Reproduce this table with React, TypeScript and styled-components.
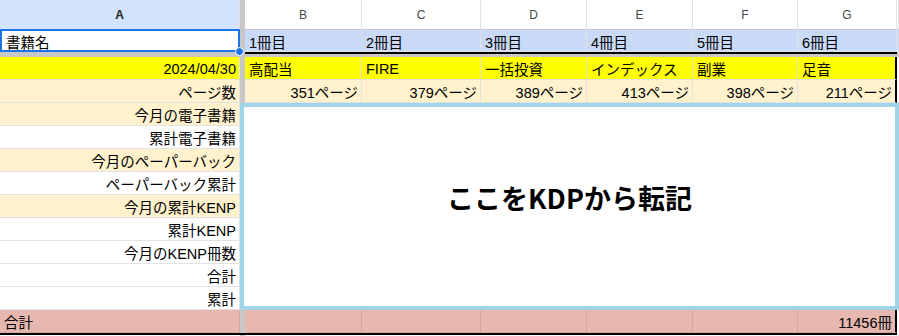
import React from "react";
import styled, { createGlobalStyle } from "styled-components";

const Global = createGlobalStyle`
  html, body { margin: 0; padding: 0; background: #ffffff; }
  body { font-family: "Liberation Sans", "Noto Sans CJK JP", sans-serif; }
`;

const GRID = "#e2e2e2";
const FREEZE = "#c8c8c8";

const Sheet = styled.div`
  display: grid;
  grid-template-columns: 240px 5px 117px 119px 106px 106px 105px 99px 2px;
  grid-template-rows: 30px 22px 5px repeat(12, 23px) 3px;
  width: 899px;
  height: 336px;
  overflow: hidden;
  background: #ffffff;
  font-family: "Liberation Sans", "Noto Sans CJK JP", sans-serif;
  font-size: 14.5px;
  color: #000000;
`;

const ColHeader = styled.div<{ $col: number; $active?: boolean }>`
  grid-column: ${(p) => p.$col};
  grid-row: 1;
  display: flex;
  align-items: center;
  justify-content: center;
  box-sizing: border-box;
  border-right: 1px solid ${GRID};
  border-bottom: 1px solid ${FREEZE};
  background: ${(p) => (p.$active ? "#d3e3fd" : "#ffffff")};
  color: ${(p) => (p.$active ? "#1f1f1f" : "#444746")};
  font-weight: ${(p) => (p.$active ? 700 : 400)};
  font-size: 12px;
`;

const Cell = styled.div<{
  $col: number;
  $row: number;
  $bg?: string;
  $align?: "left" | "right";
  $line?: string;
  $edge?: boolean;
}>`
  grid-column: ${(p) => p.$col};
  grid-row: ${(p) => p.$row};
  display: flex;
  align-items: center;
  justify-content: ${(p) => (p.$align === "right" ? "flex-end" : "flex-start")};
  box-sizing: border-box;
  padding: 1px 3px 0 4px;
  background: ${(p) => p.$bg ?? "#ffffff"};
  border-bottom: 1px solid ${(p) => p.$line ?? GRID};
  border-right: ${(p) => (p.$edge ? "2px solid #000000" : `1px solid ${p.$line ?? GRID}`)};
  white-space: nowrap;
  overflow: hidden;
`;

const SelectedCell = styled(Cell)`
  position: relative;
  overflow: visible;
  padding-left: 6px;
  &::after {
    content: "";
    position: absolute;
    left: 0;
    top: -1px;
    right: -1px;
    bottom: -1px;
    border: 2px solid #1a73e8;
    pointer-events: none;
  }
`;

const Handle = styled.span`
  position: absolute;
  right: -5px;
  bottom: -5px;
  width: 9px;
  height: 9px;
  border-radius: 50%;
  background: #1a73e8;
  border: 1px solid #ffffff;
  box-sizing: border-box;
  z-index: 2;
`;

const Divider = styled.div`
  grid-column: 2;
  grid-row: 1 / -1;
  background: ${FREEZE};
`;

const FreezeBand = styled.div<{ $from: number; $to: number; $rule?: boolean }>`
  grid-column: ${(p) => p.$from} / ${(p) => p.$to};
  grid-row: 3;
  background: ${FREEZE};
  box-sizing: border-box;
  border-top: ${(p) => (p.$rule ? "2px solid #000000" : "none")};
`;

const BottomRule = styled.div`
  grid-column: 1 / 9;
  grid-row: 16;
  box-sizing: border-box;
  border-top: 2px solid #000000;
`;

const Merged = styled.div`
  grid-column: 2 / 10;
  grid-row: 6 / 15;
  z-index: 1;
  display: flex;
  align-items: center;
  justify-content: center;
  box-sizing: border-box;
  padding-bottom: 18px;
  background: #ffffff;
  border: 4px solid #9fd5e6;
  font-family: "Noto Sans CJK JP", sans-serif;
  font-weight: 700;
  font-size: 27px;
  color: #000000;
`;

const letters = ["B", "C", "D", "E", "F", "G"];
const titles = ["1冊目", "2冊目", "3冊目", "4冊目", "5冊目", "6冊目"];
const books = ["高配当", "FIRE", "一括投資", "インデックス", "副業", "足音"];
const pages = [351, 379, 389, 413, 398, 211];

const TAN = "#fff2cc";
const labels: { text: string; bg: string }[] = [
  { text: "今月の電子書籍", bg: TAN },
  { text: "累計電子書籍", bg: "#ffffff" },
  { text: "今月のペーパーバック", bg: TAN },
  { text: "ペーパーバック累計", bg: "#ffffff" },
  { text: "今月の累計KENP", bg: TAN },
  { text: "累計KENP", bg: "#ffffff" },
  { text: "今月のKENP冊数", bg: "#ffffff" },
  { text: "合計", bg: "#ffffff" },
  { text: "累計", bg: "#ffffff" },
];

export default function App() {
  return (
    <>
      <Global />
      <Sheet>
        <ColHeader $col={1} $active>
          A
        </ColHeader>
        {letters.map((l, i) => (
          <ColHeader key={l} $col={i + 3}>
            {l}
          </ColHeader>
        ))}
        <ColHeader $col={9} />

        <Divider />

        <SelectedCell $col={1} $row={2}>
          書籍名
          <Handle />
        </SelectedCell>
        {titles.map((t, i) => (
          <Cell key={t} $col={i + 3} $row={2} $bg="#c9daf8">
            {t}
          </Cell>
        ))}
        <Cell $col={9} $row={2} $bg="#c9daf8" />

        <FreezeBand $from={1} $to={3} />
        <FreezeBand $from={3} $to={9} $rule />
        <FreezeBand $from={9} $to={10} />

        <Cell $col={1} $row={4} $bg="#ffff00" $align="right">
          2024/04/30
        </Cell>
        {books.map((b, i) => (
          <Cell key={b} $col={i + 3} $row={4} $bg="#ffff00" $edge={i === 5}>
            {b}
          </Cell>
        ))}

        <Cell $col={1} $row={5} $bg={TAN} $align="right">
          ページ数
        </Cell>
        {pages.map((p, i) => (
          <Cell key={i} $col={i + 3} $row={5} $bg={TAN} $align="right" $edge={i === 5}>
            {p}ページ
          </Cell>
        ))}

        {labels.map((l, i) => (
          <Cell key={l.text + i} $col={1} $row={i + 6} $bg={l.bg} $align="right">
            {l.text}
          </Cell>
        ))}

        <Merged>ここをKDPから転記</Merged>

        <Cell $col={1} $row={15} $bg="#e6b8af" $line="#d6a59c">
          合計
        </Cell>
        {letters.map((l, i) => (
          <Cell
            key={"sum" + l}
            $col={i + 3}
            $row={15}
            $bg="#e6b8af"
            $line="#d6a59c"
            $align="right"
            $edge={i === 5}
          >
            {i === 5 ? "11456冊" : ""}
          </Cell>
        ))}

        <BottomRule />
      </Sheet>
    </>
  );
}
